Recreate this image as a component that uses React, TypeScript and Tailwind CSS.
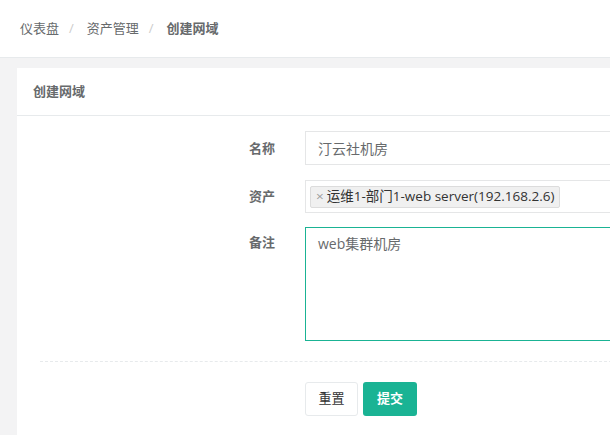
import React from 'react';

const font = { fontFamily: '"Open Sans", "Noto Sans CJK SC", sans-serif' };

export default function App() {
  return (
    <div className="w-[610px] h-[435px] overflow-hidden bg-[#f3f3f4] text-[13px] text-[#676a6c]" style={font}>
      <div className="h-[58px] bg-white border-b border-[#e7eaec] flex items-center pl-[20px] gap-[10px]">
        <span>仪表盘</span>
        <span className="text-[#ccc]">/</span>
        <span className="ml-[3px]">资产管理</span>
        <span className="text-[#ccc]">/</span>
        <span className="ml-[3px] font-bold">创建网域</span>
      </div>
      <div className="ml-[17px] mt-[10px] w-[620px] h-[400px] bg-white">
        <div className="h-[48px] border-b border-[#e7eaec] flex items-center pl-[16px] font-bold">创建网域</div>
        <div className="pt-[15px] pl-[23px]">
          <div className="flex items-start">
            <label className="w-[265px] text-right pr-[30px] font-bold pt-[8px]">名称</label>
            <div className="flex-1 h-[34px] border border-[#e5e6e7] flex items-center pl-[12px] text-[14px]">汀云社机房</div>
          </div>
          <div className="flex items-start mt-[15px]">
            <label className="w-[265px] text-right pr-[30px] font-bold pt-[7px]">资产</label>
            <div className="flex-1 h-[33px] border border-[#e5e6e7] flex items-center pl-[4px]">
              <span className="h-[22px] bg-[#f0f0f0] border border-[#dcdcdc] rounded-[2px] flex items-center px-[5px] text-[13.5px] text-[#333]">
                <span className="text-[#999] mr-[3px]">×</span>运维1-部门1-web server(192.168.2.6)
              </span>
            </div>
          </div>
          <div className="flex items-start mt-[14px]">
            <label className="w-[265px] text-right pr-[30px] font-bold pt-[6px]">备注</label>
            <div className="flex-1 h-[114px] border border-[#1ab394] pl-[12px] pt-[5px] text-[14px]">web集群机房</div>
          </div>
          <div className="mt-[20px] border-t border-dashed border-[#e7eaec]" />
          <div className="flex gap-[5px] pl-[265px] mt-[20px]">
            <button className="h-[34px] w-[53px] border border-[#e7eaec] rounded-[3px] bg-white text-[#333] font-normal">重置</button>
            <button className="h-[34px] w-[54px] rounded-[3px] bg-[#1ab394] text-white font-bold">提交</button>
          </div>
        </div>
      </div>
    </div>
  );
}
